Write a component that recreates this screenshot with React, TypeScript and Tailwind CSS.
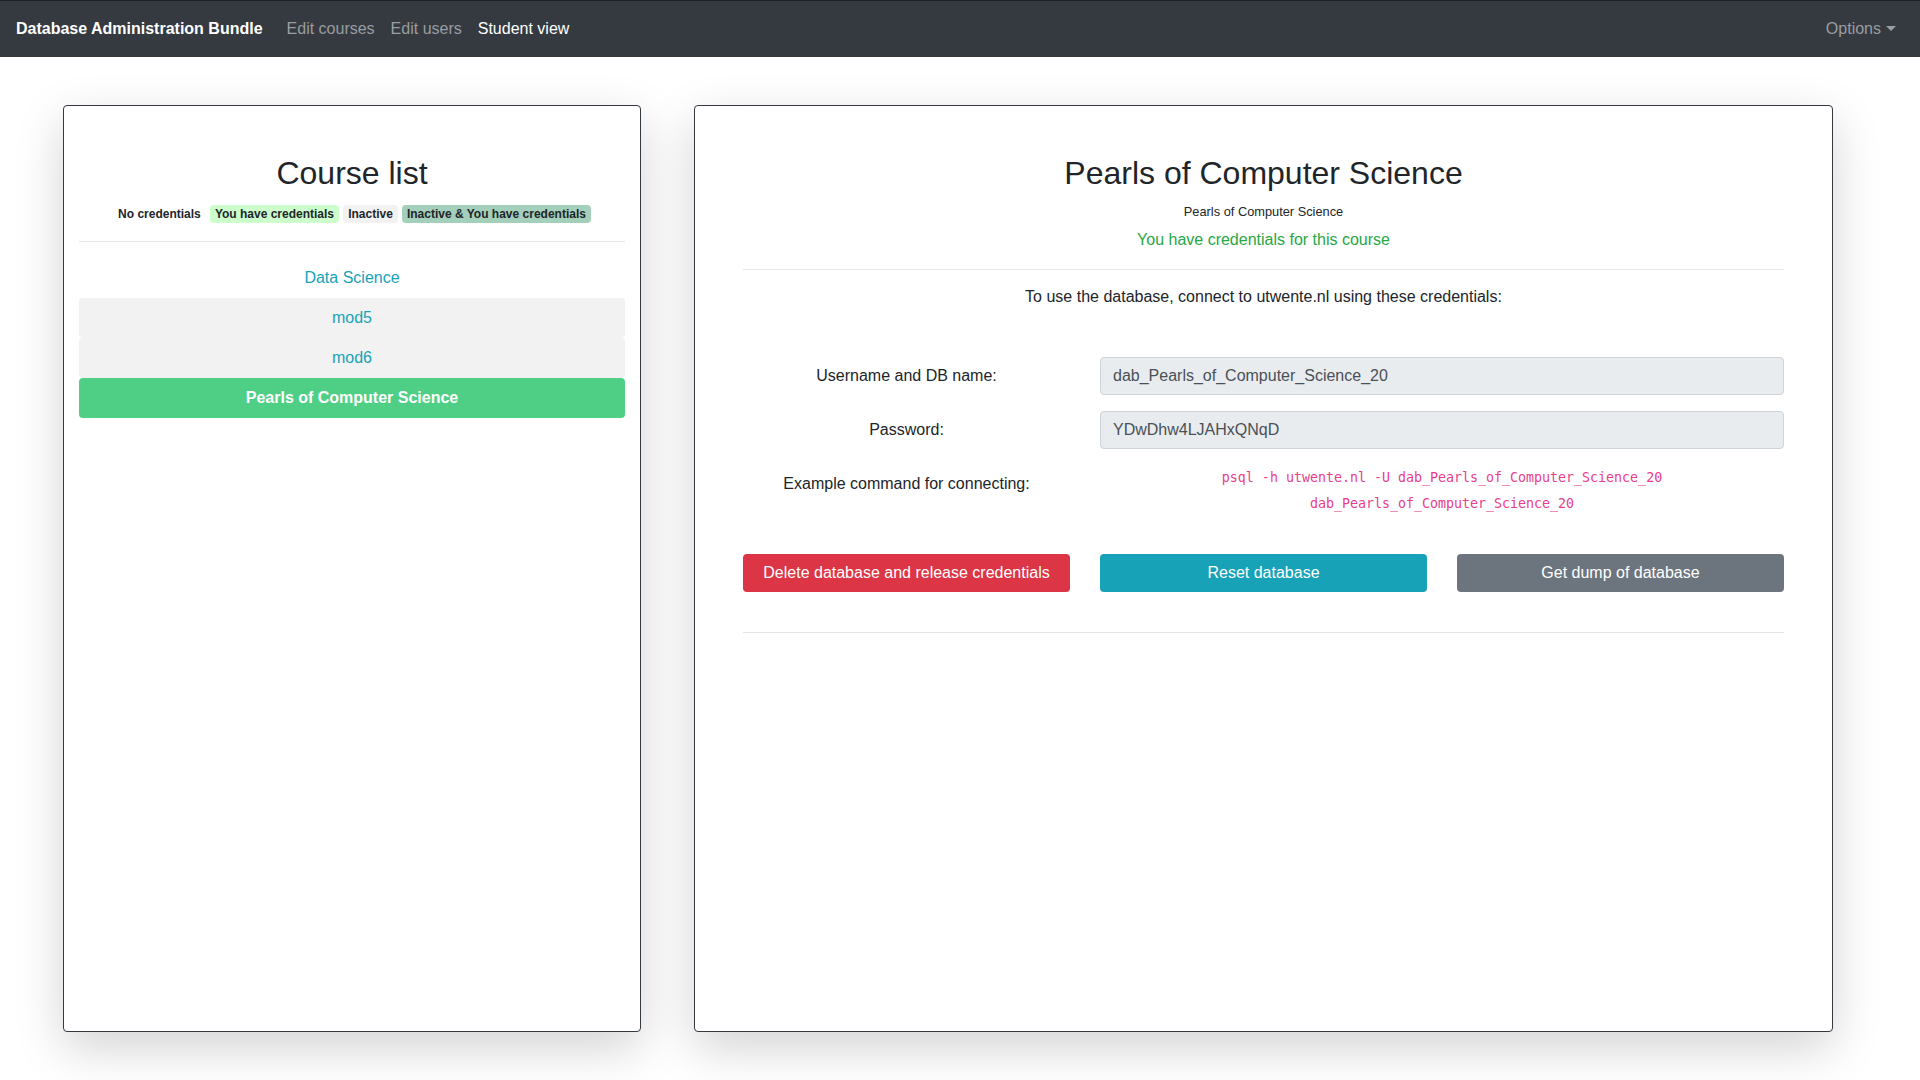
import React from "react";

const sans = { fontFamily: '"Liberation Sans", Arial, sans-serif' };

function Badge({ label, cls }: { label: string; cls: string }) {
  return (
    <span className={`inline-flex h-[18px] items-center rounded-[4px] px-[4.8px] text-[12px] font-bold leading-none text-[#212529] ${cls}`}>
      {label}
    </span>
  );
}

function Field({ label, value }: { label: string; value: string }) {
  return (
    <div className="flex">
      <div className="flex w-[327px] shrink-0 items-center justify-center text-[16px] text-[#212529]">{label}</div>
      <div className="ml-[30px] flex-1">
        <div className="flex h-[38px] items-center rounded-[4px] border border-[#ced4da] bg-[#e9ecef] px-[12px] text-[16px] text-[#495057]">
          {value}
        </div>
      </div>
    </div>
  );
}

export default function App() {
  return (
    <div className="min-h-[1080px] w-[1920px] overflow-hidden bg-white" style={sans}>
      <nav className="flex h-[57px] items-center border-t border-[#1d2124] bg-[#343a40] px-[16px]">
        <span className="mr-[16px] text-[16px] font-bold text-white">Database Administration Bundle</span>
        <span className="px-[8px] text-[16px] text-[#9a9da0]">Edit courses</span>
        <span className="px-[8px] text-[16px] text-[#9a9da0]">Edit users</span>
        <span className="px-[8px] text-[16px] text-white">Student view</span>
        <div className="ml-auto flex items-center px-[8px] text-[16px] text-[#9a9da0]">
          <span>Options</span>
          <svg className="ml-[5px]" width="10" height="6" viewBox="0 0 10 6">
            <polygon points="0,0 10,0 5,5" fill="#9a9da0" />
          </svg>
        </div>
      </nav>

      <main className="flex gap-[53px] pl-[63px] pt-[48px]">
        {/* Left card */}
        <section className="flex h-[927px] w-[578px] shrink-0 flex-col rounded-[4px] border border-[#343a40] bg-white px-[15px] pt-[48px] shadow-[0_1rem_3rem_rgba(0,0,0,0.175)]">
          <h2 className="text-center text-[32px] font-normal leading-[38px] text-[#212529]">Course list</h2>
          <div className="mt-[10px] flex h-[24px] items-center justify-center gap-[4.5px]">
            <Badge label="No credentials" cls="bg-white" />
            <Badge label="You have credentials" cls="bg-[#ccffcc]" />
            <Badge label="Inactive" cls="bg-[#f2f2f2]" />
            <Badge label="Inactive & You have credentials" cls="bg-[#a3cfbb]" />
          </div>
          <div className="mt-[15px] h-px bg-[#e5e5e5]" />
          <div className="mt-[16px] flex flex-col">
            <div className="flex h-[40px] items-center justify-center text-[16px] text-[#17a2b8]">Data Science</div>
            <div className="flex h-[40px] items-center justify-center rounded-[4px] bg-[#f2f2f2] text-[16px] text-[#17a2b8]">mod5</div>
            <div className="flex h-[40px] items-center justify-center rounded-[4px] bg-[#f2f2f2] text-[16px] text-[#17a2b8]">mod6</div>
            <div className="flex h-[40px] items-center justify-center rounded-[4px] bg-[#4fcf85] text-[16px] font-bold text-white">Pearls of Computer Science</div>
          </div>
        </section>

        {/* Right card */}
        <section className="flex h-[927px] w-[1139px] shrink-0 flex-col rounded-[4px] border border-[#343a40] bg-white px-[48px] pt-[48px] shadow-[0_1rem_3rem_rgba(0,0,0,0.175)]">
          <h2 className="text-center text-[32px] font-normal leading-[38px] text-[#212529]">Pearls of Computer Science</h2>
          <div className="mt-[10px] text-center text-[12.8px] leading-[19px] text-[#212529]">Pearls of Computer Science</div>
          <div className="mt-[7px] text-center text-[16px] leading-[24px] text-[#28a745]">You have credentials for this course</div>
          <div className="mt-[17px] h-px bg-[#e5e5e5]" />
          <div className="mt-[15px] text-center text-[16px] leading-[24px] text-[#212529]">
            To use the database, connect to utwente.nl using these credentials:
          </div>

          <div className="mt-[48px] flex flex-col gap-[16px]">
            <Field label="Username and DB name:" value="dab_Pearls_of_Computer_Science_20" />
            <Field label="Password:" value="YDwDhw4LJAHxQNqD" />
            <div className="flex">
              <div className="w-[327px] shrink-0 pt-[7px] text-center text-[16px] leading-[24px] text-[#212529]">
                Example command for connecting:
              </div>
              <div
                className="ml-[30px] flex flex-1 flex-col items-center text-[13.3px] leading-[26px] text-[#e83e8c]"
                style={{ fontFamily: '"DejaVu Sans Mono", "Liberation Mono", monospace' }}
              >
                <span>psql -h utwente.nl -U dab_Pearls_of_Computer_Science_20</span>
                <span>dab_Pearls_of_Computer_Science_20</span>
              </div>
            </div>
          </div>

          <div className="mt-[37px] grid grid-cols-3 gap-[30px]">
            <button className="flex h-[38px] items-center justify-center rounded-[4px] bg-[#dc3545] text-[16px] text-white">
              Delete database and release credentials
            </button>
            <button className="flex h-[38px] items-center justify-center rounded-[4px] bg-[#17a2b8] text-[16px] text-white">
              Reset database
            </button>
            <button className="flex h-[38px] items-center justify-center rounded-[4px] bg-[#6c757d] text-[16px] text-white">
              Get dump of database
            </button>
          </div>
          <div className="mt-[40px] h-px bg-[#e5e5e5]" />
        </section>
      </main>
    </div>
  );
}
